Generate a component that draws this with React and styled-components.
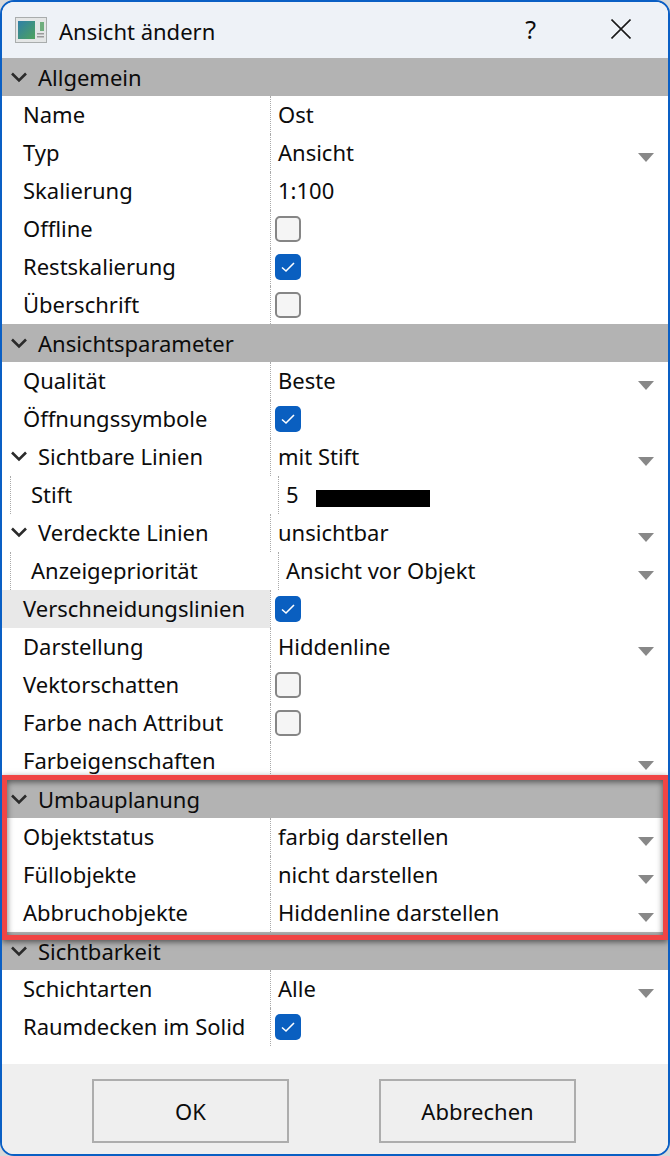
import styled, { createGlobalStyle } from 'styled-components';

const GlobalStyle = createGlobalStyle`
  html, body {
    margin: 0;
    padding: 0;
    background: #d9d9d9;
  }
`;

const Win = styled.div`
  position: relative;
  box-sizing: border-box;
  width: 670px;
  height: 1156px;
  display: flex;
  flex-direction: column;
  overflow: hidden;
  background: #fff;
  border: 2px solid #0a5fc4;
  border-radius: 14px;
  font-family: 'Noto Sans', sans-serif;
  font-size: 22px;
  color: #0c0c0c;
`;

const TitleBar = styled.div`
  height: 56px;
  flex: none;
  display: flex;
  align-items: center;
  background: #eef2f7;
  padding-left: 13px;
`;

const TitleText = styled.span`
  margin-left: 12px;
  margin-top: 2px;
`;

const HelpBtn = styled.span`
  margin-left: auto;
  margin-right: 75px;
  margin-top: -2px;
  font-size: 25px;
`;

const CloseBtn = styled.svg`
  margin-right: 37px;
  margin-top: -3px;
`;

const Section = styled.div`
  height: 38px;
  flex: none;
  display: flex;
  align-items: center;
  background: #b3b3b3;
  padding-left: 8px;
`;

const Caret = styled.svg`
  flex: none;
  width: 18px;
  height: 12px;
  margin-right: 10px;
`;

const Row = styled.div`
  height: 38px;
  flex: none;
  display: flex;
`;

const Label = styled.div`
  box-sizing: border-box;
  width: 268px;
  flex: none;
  display: flex;
  align-items: center;
  padding-left: ${p => (p.$group ? 8 : p.$child ? 0 : 21)}px;
  padding-bottom: 3px;
  background: ${p => (p.$active ? '#e8e8e8' : 'transparent')};
  ${p => p.$child && 'margin-left: 8px; width: 260px; border-left: 1px dotted #aaa; padding-left: 20px;'}
`;

const Value = styled.div`
  flex: 1;
  display: flex;
  align-items: center;
  box-sizing: border-box;
  border-left: 1px dotted #aaa;
  padding-left: ${p => (p.$check ? 4 : 7)}px;
  padding-bottom: ${p => (p.$check ? 0 : 3)}px;
  ${p => p.$child && 'margin-left: 8px;'}
`;

const Arrow = styled.span`
  margin-left: auto;
  margin-right: 14px;
  margin-top: 12px;
  width: 0;
  height: 0;
  border-left: 8px solid transparent;
  border-right: 8px solid transparent;
  border-top: 9px solid #888;
`;

const Check = styled.span`
  box-sizing: border-box;
  width: 26px;
  height: 26px;
  border-radius: 5px;
  display: flex;
  align-items: center;
  justify-content: center;
  background: ${p => (p.$on ? '#0a5fc0' : '#f5f5f5')};
  border: ${p => (p.$on ? 'none' : '2px solid #868686')};
`;

const PenBar = styled.span`
  width: 114px;
  height: 17px;
  background: #000;
  margin-left: 17px;
  margin-top: 9px;
`;

const Body = styled.div`
  flex: 1;
`;

const Footer = styled.div`
  height: 90px;
  flex: none;
  display: flex;
  gap: 90px;
  padding: 15px 0 0 90px;
  box-sizing: border-box;
  background: #efefef;
`;

const Btn = styled.button`
  width: 197px;
  height: 64px;
  box-sizing: border-box;
  border: 2px solid #adadad;
  background: #efefef;
  font: inherit;
  color: inherit;
  padding: 0;
`;

// red annotation drawn over the screenshot
const Highlight = styled.div`
  position: absolute;
  left: 0;
  top: 773px;
  width: 666px;
  height: 165px;
  box-sizing: border-box;
  border: 5px solid #f04545;
  box-shadow: 0 2px 6px rgba(0, 0, 0, 0.55), inset 0 2px 6px rgba(0, 0, 0, 0.55);
  pointer-events: none;
`;

const rows = [
  { section: 'Allgemein' },
  { label: 'Name', value: 'Ost' },
  { label: 'Typ', value: 'Ansicht', drop: true },
  { label: 'Skalierung', value: '1:100' },
  { label: 'Offline', check: false },
  { label: 'Restskalierung', check: true },
  { label: 'Überschrift', check: false },
  { section: 'Ansichtsparameter' },
  { label: 'Qualität', value: 'Beste', drop: true },
  { label: 'Öffnungssymbole', check: true },
  { label: 'Sichtbare Linien', value: 'mit Stift', drop: true, group: true },
  { label: 'Stift', value: '5', child: true, pen: true },
  { label: 'Verdeckte Linien', value: 'unsichtbar', drop: true, group: true },
  { label: 'Anzeigepriorität', value: 'Ansicht vor Objekt', drop: true, child: true },
  { label: 'Verschneidungslinien', check: true, active: true },
  { label: 'Darstellung', value: 'Hiddenline', drop: true },
  { label: 'Vektorschatten', check: false },
  { label: 'Farbe nach Attribut', check: false },
  { label: 'Farbeigenschaften', value: '', drop: true },
  { section: 'Umbauplanung' },
  { label: 'Objektstatus', value: 'farbig darstellen', drop: true },
  { label: 'Füllobjekte', value: 'nicht darstellen', drop: true },
  { label: 'Abbruchobjekte', value: 'Hiddenline darstellen', drop: true },
  { section: 'Sichtbarkeit' },
  { label: 'Schichtarten', value: 'Alle', drop: true },
  { label: 'Raumdecken im Solid', check: true },
];

const Chevron = () => (
  <Caret viewBox="0 0 18 12">
    <path d="M2 2.5 L9 9.5 L16 2.5" fill="none" stroke="#2b2b2b" strokeWidth="2.6" />
  </Caret>
);

const Tick = () => (
  <svg width="16" height="12" viewBox="0 0 16 12">
    <path d="M2 6.5 L6 10 L14 2" fill="none" stroke="#fff" strokeWidth="1.6" />
  </svg>
);

const AppIcon = () => (
  <svg width="32" height="26" viewBox="0 0 32 26">
    <defs>
      <linearGradient id="pane" x1="0" y1="0" x2="1" y2="1">
        <stop offset="0" stopColor="#2f7fa8" />
        <stop offset="1" stopColor="#4fa35c" />
      </linearGradient>
    </defs>
    <rect x="0.5" y="0.5" width="31" height="25" fill="#e4e6e6" stroke="#a9adad" />
    <rect x="3" y="4" width="17" height="18" fill="url(#pane)" />
    <rect x="25" y="5" width="4" height="9" fill="#6fae7d" />
    <rect x="22" y="16" width="7" height="1.5" fill="#9a9a9a" />
    <rect x="22" y="19" width="7" height="1.5" fill="#9a9a9a" />
  </svg>
);

const PropertyRow = ({ row }) => (
  <Row>
    <Label $group={row.group} $child={row.child} $active={row.active}>
      {row.group && <Chevron />}
      {row.label}
    </Label>
    <Value $check={row.check !== undefined} $child={row.child}>
      {row.check !== undefined ? (
        <Check $on={row.check}>{row.check && <Tick />}</Check>
      ) : (
        row.value
      )}
      {row.pen && <PenBar />}
      {row.drop && <Arrow />}
    </Value>
  </Row>
);

const App = () => (
  <>
    <GlobalStyle />
    <Win>
      <TitleBar>
        <AppIcon />
        <TitleText>Ansicht ändern</TitleText>
        <HelpBtn>?</HelpBtn>
        <CloseBtn width="20" height="20" viewBox="0 0 20 20">
          <path d="M0.5 0.5 L19.5 19.5 M19.5 0.5 L0.5 19.5" stroke="#1a1a1a" strokeWidth="1.6" />
        </CloseBtn>
      </TitleBar>
      <Body>
        {rows.map(row =>
          row.section ? (
            <Section key={row.section}>
              <Chevron />
              {row.section}
            </Section>
          ) : (
            <PropertyRow key={row.label} row={row} />
          ),
        )}
      </Body>
      <Footer>
        <Btn>OK</Btn>
        <Btn>Abbrechen</Btn>
      </Footer>
      <Highlight />
    </Win>
  </>
);

export default App;
